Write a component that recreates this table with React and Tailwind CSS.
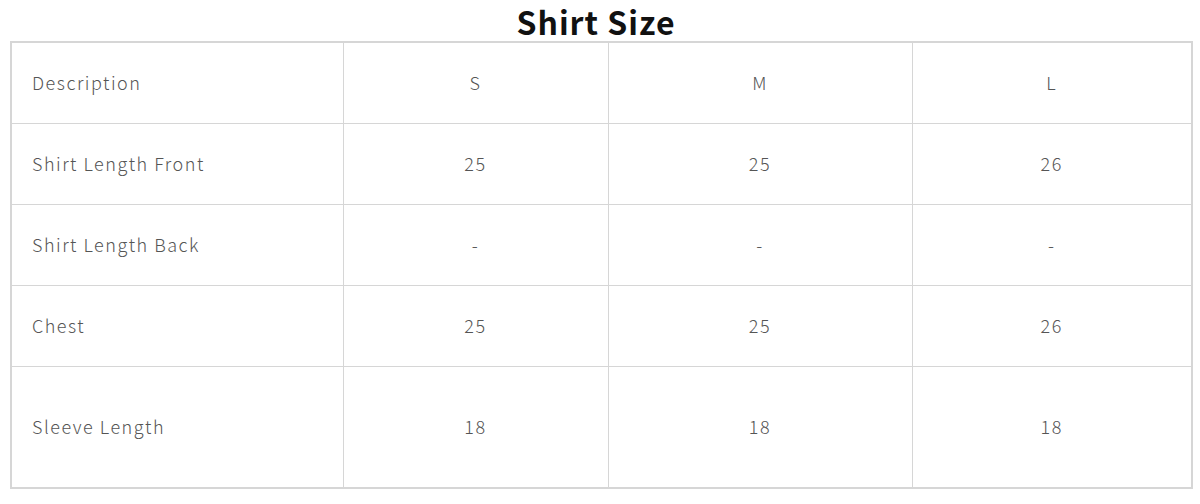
import React from "react";

const rows = [
  { label: "Shirt Length Front", s: "25", m: "25", l: "26" },
  { label: "Shirt Length Back", s: "-", m: "-", l: "-" },
  { label: "Chest", s: "25", m: "25", l: "26" },
  { label: "Sleeve Length", s: "18", m: "18", l: "18", tall: true },
];

const cell = "border border-[#d6d6d6] text-center align-middle";

export default function App() {
  return (
    <div
      className="w-[1200px] h-[504px] bg-white text-[#555]"
      style={{ fontFamily: '"Noto Sans CJK SC", "Noto Sans", sans-serif' }}
    >
      <div className="h-[41px] pr-[8px] flex items-center justify-center">
        <h2 className="text-[32px] font-bold leading-none text-[#111] tracking-[1px]">Shirt Size</h2>
      </div>
      <div className="px-[10px]">
        <table className="w-[1181px] border-collapse border-2 border-[#d6d6d6] text-[18px] font-light tracking-[1.5px] table-fixed">
          <colgroup>
            <col className="w-[332px]" />
            <col className="w-[265px]" />
            <col className="w-[304px]" />
            <col className="w-[280px]" />
          </colgroup>
          <thead>
            <tr className="h-[81px]">
              <th className="border border-[#d6d6d6] text-left pl-[20px] font-light">Description</th>
              <th className={`${cell} font-light`}>S</th>
              <th className={`${cell} font-light`}>M</th>
              <th className={`${cell} font-light`}>L</th>
            </tr>
          </thead>
          <tbody>
            {rows.map((r) => (
              <tr key={r.label} className={r.tall ? "h-[122px]" : "h-[81px]"}>
                <td className="border border-[#d6d6d6] text-left pl-[20px]">{r.label}</td>
                <td className={cell}>{r.s}</td>
                <td className={cell}>{r.m}</td>
                <td className={cell}>{r.l}</td>
              </tr>
            ))}
          </tbody>
        </table>
      </div>
    </div>
  );
}
